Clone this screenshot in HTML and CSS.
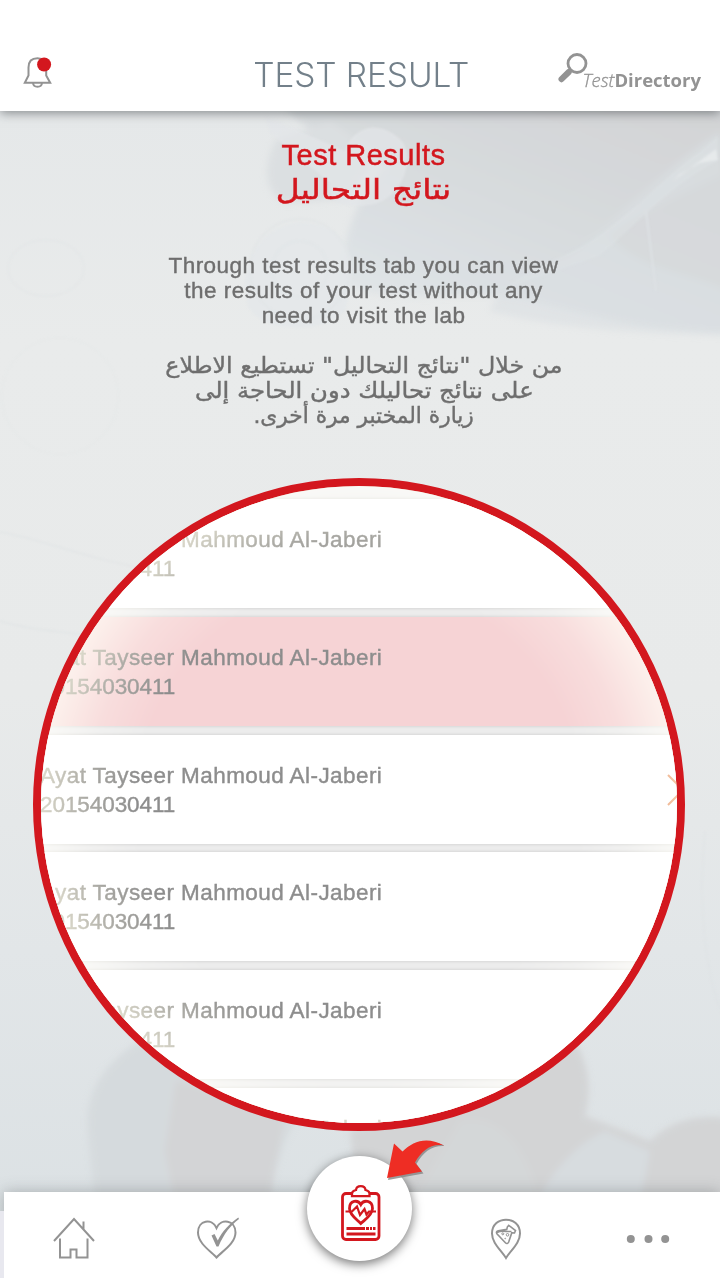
FILE: index.html
```html
<!DOCTYPE html>
<html lang="en">
<head>
<meta charset="utf-8">
<title>Test Result</title>
<link rel="stylesheet" href="styles.css">
</head>
<body>
<div class="app">
  <header class="topbar">
    <svg class="bell" viewBox="0 0 30 34" width="30" height="34">
      <path class="line" d="M5.500 19.500V11.500C5.500 5.500 9 2.200 14.500 2.200S23.200 5.500 23.200 11.500V19.500L27.200 26.800H1.800Z M10 27c.5 5 8.500 5 9 0"/>
      <circle class="dot" cx="21.100" cy="8.500" r="7"/>
    </svg>
    <h1 class="title">TEST RESULT</h1>
    <div class="directory">
      <svg class="lens" viewBox="0 0 30 30" width="30" height="30">
        <circle cx="19" cy="10.500" r="9" />
        <path d="M10.800 19L3.500 26.200"/>
      </svg>
      <span class="dir-light">Test</span><span class="dir-bold">Directory</span>
    </div>
  </header>

  <main class="content">
    <svg class="scene" viewBox="0 0 720 1167" width="720" height="1167" preserveAspectRatio="none">
      <defs>
        <linearGradient id="base" x1="0" y1="0" x2="0" y2="1">
          <stop offset="0" stop-color="#e5e8e9"/><stop offset=".2" stop-color="#e9ebeb"/>
          <stop offset=".5" stop-color="#e8eaea"/><stop offset=".72" stop-color="#e2e6e8"/><stop offset="1" stop-color="#dae0e3"/>
        </linearGradient>
        <linearGradient id="hand" x1="1" y1="0" x2=".2" y2="1">
          <stop offset="0" stop-color="#d2d3d5"/><stop offset=".4" stop-color="#d6d9db"/><stop offset=".75" stop-color="#dbe0e3"/><stop offset="1" stop-color="#e5e8e9"/>
        </linearGradient>
        <filter id="soft" x="-10%" y="-10%" width="120%" height="120%"><feGaussianBlur stdDeviation="3"/></filter>
        <filter id="fine"><feGaussianBlur stdDeviation="1"/></filter>
      </defs>
      <rect width="720" height="1167" fill="url(#base)"/>
      <g filter="url(#soft)">
        <path d="M280 -10H740V222C650 222 590 205 530 190S380 200 340 170C345 120 355 90 385 55C350 40 300 20 280 -10Z" fill="url(#hand)"/>
        <path d="M275 30C262 60 265 80 285 92L345 88L380 45L330 10Z" fill="#dbdfe1"/>
        <path d="M720 20C660 60 620 105 570 145C540 165 500 170 490 200C570 220 650 222 730 225V120Z" fill="#dae0e3" opacity=".6"/>
        <path d="M610 125C640 100 690 80 730 60V180C690 160 640 160 610 125Z" fill="#d5d7d9" opacity=".6"/>
        <path d="M88 1020C85 985 100 955 140 930L300 1000L285 1030L265 1090H95Z" fill="#d5dadd"/>
        <path d="M176 970L165 1040L175 1090H270L285 1000Z" fill="#d3d4d6"/>
        <path d="M575 930C592 960 590 985 585 1005L650 1030C670 1010 700 1002 730 1008V1095H360L350 1020Z" fill="#d3d4d5"/>
        <path d="M460 1010C500 1000 530 1040 540 1095H410Z" fill="#d5d9dc" opacity=".5"/>
        <path d="M535 1095C550 1060 580 1030 605 1020L650 1040L640 1095Z" fill="#d9dfe2" opacity=".7"/>
      </g>
      <g filter="url(#fine)">
        <path d="M265 5L345 40C350 20 375 5 400 28C418 45 402 90 370 94C345 98 325 90 330 72L270 22Z" fill="#e2e6e8" opacity=".7"/>
        <path d="M245 170C250 135 270 115 300 112C335 112 355 135 352 165L345 200C320 225 260 220 248 195Z" fill="#e4e8ea" opacity=".85"/>
        <g fill="none" stroke="#dfe3e5" stroke-width="1.500" opacity=".55">
          <circle cx="300" cy="158" r="50"/><circle cx="300" cy="158" r="28"/>
          <ellipse cx="46" cy="157" rx="38" ry="28" opacity=".6"/><circle cx="60" cy="285" r="58" opacity=".3"/>
          <path d="M0 421C50 430 90 450 160 460M0 510C30 520 65 520 90 525"/>
          <path d="M705 720C698 790 704 865 725 910"/>
        </g>
        <path d="M500 180C530 155 570 145 595 127C635 100 665 65 700 40L718 25V50C670 75 640 110 600 145Z" fill="#dfe4e6" opacity=".4"/>
        <path d="M673 70L716 38L718 49L700 52L680 63Z" fill="#e8ecee" opacity=".8"/>
        <path d="M646 100L656 180" stroke="#dde1e4" stroke-width="2"/>
      </g>
    </svg>

    <section class="intro">
      <h2 class="heading">Test Results</h2>
      <h2 class="heading-ar" dir="rtl" lang="ar"><span class="fit fit-title">نتائج التحاليل</span></h2>
      <p class="copy">Through test results tab you can view<br>the results of your test without any<br>need to visit the lab</p>
      <p class="copy-ar" dir="rtl" lang="ar">
        <span class="fit fit-one">من خلال "نتائج التحاليل" تستطيع الاطلاع</span>
        <span class="fit fit-two">على نتائج تحاليلك دون الحاجة إلى</span>
        <span class="fit fit-three">زيارة المختبر مرة أخرى.</span>
      </p>
    </section>

    <section class="magnifier">
      <ul class="results">
        <li class="row"><span class="name">Ayat Tayseer Mahmoud Al-Jaberi</span><span class="number">20154030411</span></li>
        <li class="row selected"><span class="name">Ayat Tayseer Mahmoud Al-Jaberi</span><span class="number">20154030411</span></li>
        <li class="row"><span class="name">Ayat Tayseer Mahmoud Al-Jaberi</span><span class="number">20154030411</span>
          <svg class="chevron" viewBox="0 0 18 32" width="18" height="32"><path d="M1 1L16 16L1 31"/></svg></li>
        <li class="row"><span class="name">Ayat Tayseer Mahmoud Al-Jaberi</span><span class="number">20154030411</span></li>
        <li class="row"><span class="name">Ayat Tayseer Mahmoud Al-Jaberi</span><span class="number">20154030411</span></li>
        <li class="row"><span class="name">Ayat Tayseer Mahmoud Al-Jaberi</span></li>
      </ul>
    </section>
  </main>

  <nav class="tabs">
    <svg class="tab" viewBox="0 0 44 46" width="44" height="46">
      <path d="M2 25L22 3L42 25M31.500 13V5.500M8 22.500V41.500H18.500V33.500H24.500V41.500H35.500V22.500"/>
    </svg>
    <svg class="tab" viewBox="0 0 44 46" width="44" height="46">
      <path d="M21.500 41.500C17 36 3 28 3 16.500C3 4 17 2 21.500 12C26 2 40.500 4 40.500 16.500C40.500 28 26 36 21.500 41.500Z"/>
      <path class="solid" d="M16.500 19.500L19.500 18L22.800 24.500C27.500 15 34 8 43.300 1.500L44 3C35.500 9.500 29 17.500 23.500 30.500H21.500Z"/>
    </svg>
    <div class="fab">
      <svg viewBox="0 0 42 58" width="42" height="58">
        <g class="red-line">
          <rect x="2.500" y="9.500" width="36.500" height="46" rx="3.500"/>
          <path class="tray" d="M12 12.200V9.500C12 7 14 6.500 16 6C16.500 .8 25 .8 25.500 6C27.500 6.500 29.500 7 29.500 9.500V12.200Z"/>
          <path d="M20.800 39.500C17 35.500 9.500 31 9.500 24.500C9.500 16 18 15.500 20.800 20.500C23.500 15.500 32.500 16 32.500 24.500C32.500 31 25 35.500 20.800 39.500Z"/>
          <path class="pulse" d="M5.500 27.500H12L17 22.500L20 31L24.500 25L26.500 30.500L29 27.500H36"/>
          <path d="M6.500 44.500H25M26 44.500H29M30 44.500H32M33 44.500H35.500M6.500 50H35.500"/>
        </g>
      </svg>
    </div>
    <svg class="tab" viewBox="0 0 44 46" width="44" height="46">
      <path d="M22 42C17 34 8 27 8 17.500C8 -1 36 -1 36 17.500C36 27 27 34 22 42Z"/>
      <path class="thin" d="M24.700 9.300L31.500 14.500L30.500 17L27.800 16.700L24.700 26C24 27.800 22.600 28 21.400 26.700L12.900 17.800C12 16.500 12.600 15 14.300 14.700L22.800 13.300L23.300 11ZM13 16.500C18 13.800 22 16 27.500 15.500"/>
      <circle class="micro" cx="18.800" cy="17.800" r="1"/><circle class="micro" cx="23.500" cy="18.800" r="1.300"/><circle class="micro" cx="21.200" cy="22.500" r=".4"/>
    </svg>
    <svg class="tab" viewBox="0 0 44 46" width="44" height="46">
      <g class="solid"><circle cx="4.800" cy="23" r="4"/><circle cx="22.500" cy="23" r="4"/><circle cx="39.200" cy="23" r="4"/></g>
    </svg>
  </nav>

  <svg class="pointer" viewBox="0 0 62 44" width="62" height="44">
    <path class="pointer-shadow" d="M6 41L13.500 7L21.500 14.500C32 3 46 -1 63 7C50 6 41 13 34.500 25L41.500 34.500Z"/>
    <path class="pointer-fill" d="M5 39L12 4.500L20.500 12.500C31 2 45 -3 62 6.500C49 4 39.500 12 33 23.500L40 32.500Z"/>
  </svg>
</div>
</body>
</html>
```

FILE: styles.css
```css
* { box-sizing: border-box; }

body {
  margin: 0;
  font-family: "Liberation Sans", Arial, sans-serif;
  background: #fff;
}

.app {
  position: relative;
  display: flex;
  flex-direction: column;
  width: 720px;
  height: 1278px;
  overflow: hidden;
}

.topbar {
  position: relative;
  z-index: 2;
  display: grid;
  grid-template-columns: 229px 1fr 230px;
  align-items: center;
  height: 111px;
  padding: 35px 19px 0 22.500px;
  background: #fff;
  box-shadow: 0 2px 10px rgba(70, 75, 78, .6);
}

.bell { display: block; }
.line { fill: none; stroke: #939393; stroke-width: 2; }
.dot { fill: #d3171e; }

.title {
  margin: 3px 0 0;
  color: #73808a;
  font: 300 33.500px/40px Inter, sans-serif;
  letter-spacing: -.1px;
  text-align: center;
  white-space: nowrap;
}

.directory {
  display: flex;
  justify-content: flex-end;
  align-items: flex-end;
  height: 40px;
  color: #939393;
  font: 18.500px/26px "Open Sans", sans-serif;
}
.lens { align-self: flex-start; margin-right: -6px; fill: none; stroke: #939393; }
.lens circle { stroke-width: 2.800px; }
.lens path { stroke-width: 6px; stroke-linecap: round; }
.dir-light { font-weight: 300; font-style: italic; -webkit-text-stroke: .3px; }
.dir-bold { font-weight: 700; }

.content { position: relative; flex: 1; }
.scene { position: absolute; inset: 0; }

.intro {
  position: relative;
  padding-top: 27px;
  text-align: center;
  color: #6e6e6e;
}
.heading, .heading-ar { margin: 0 0 0 7px; color: #d3171e; font-weight: 400; }
.heading { font-size: 29px; line-height: 34px; letter-spacing: .5px; -webkit-text-stroke: .5px; }
.heading-ar { height: 34px; font: 28px/36px "DejaVu Sans", sans-serif; -webkit-text-stroke: .5px; }
.copy {
  margin: 47px 0 0 7px;
  font-size: 22.500px;
  line-height: 25px;
  letter-spacing: .47px;
  -webkit-text-stroke: .4px;
}
.copy-ar {
  display: flex;
  flex-direction: column;
  align-items: center;
  margin: 25px 0 0 8px;
  font: 22px/25px "DejaVu Sans", sans-serif;
  -webkit-text-stroke: .4px;
}
.fit { display: inline-block; white-space: nowrap; }
.fit-title { transform: scaleX(1.177); }
.fit-one { transform: scaleX(1.08); }
.fit-two { transform: scaleX(1.105); }
.fit-three { transform: scaleX(.987); }

.magnifier {
  position: relative;
  isolation: isolate;
  width: 652px;
  height: 653px;
  margin: 50px 0 0 33px;
  border: 8px solid #d3171e;
  border-radius: 50%;
  overflow: hidden;
  background: #ececec;
}
.magnifier::after {
  content: "";
  position: absolute;
  inset: 0;
  background: radial-gradient(circle closest-side, rgba(175, 170, 138, 0) 70%, rgba(175, 170, 138, .35) 85%, rgba(175, 170, 138, 1) 100%);
  mix-blend-mode: screen;
}
.results {
  display: flex;
  flex-direction: column;
  gap: 8.800px;
  margin: 0;
  padding: 13px 0 0;
  list-style: none;
}
.row {
  position: relative;
  display: flex;
  flex: none;
  flex-direction: column;
  height: 109px;
  padding: 26px 0 0;
  background: #fff;
  box-shadow: 0 0 3px rgba(0, 0, 0, .16);
  color: #8d8d8d;
  font-size: 22.500px;
  line-height: 29px;
  letter-spacing: .43px;
  white-space: nowrap;
  -webkit-text-stroke: .4px;
}
.selected { background: #f6d3d5; }
.name, .number { margin-left: -1px; }
.number { letter-spacing: -.07px; }
.chevron { position: absolute; left: 626px; top: 39px; fill: none; stroke: #dc5a3c; stroke-width: 2; }

.tabs {
  position: relative;
  display: grid;
  grid-template-columns: 139px 148px 136px 158px 126px;
  justify-items: center;
  height: 86px;
  margin-left: 4px;
  padding-top: 24px;
  background: #fff;
  box-shadow: 0 0 14px rgba(70, 75, 78, .35);
}
.tabs::before {
  content: "";
  position: absolute;
  left: -4px;
  top: 19px;
  bottom: 0;
  width: 4px;
  background: #e8e8ef;
}
.tab { fill: none; stroke: #939393; stroke-width: 2; }
.tab .solid, .solid { fill: #939393; stroke: none; }
.thin { stroke-width: 1.600px; }
.micro { stroke-width: 1px; }

.fab {
  display: flex;
  align-items: center;
  justify-content: center;
  width: 105px;
  height: 105px;
  margin-top: -60px;
  padding: 9px 0 0 3px;
  border-radius: 50%;
  background: #fff;
  box-shadow: 0 3px 11px rgba(0, 0, 0, .55);
}
.red-line { fill: none; stroke: #d3171e; stroke-width: 2.800px; }
.tray { fill: #fff; stroke-width: 2.300px; }
.pulse { stroke-width: 2.200px; }

.pointer { position: absolute; left: 382px; top: 1139px; }
.pointer-fill { fill: #ee2d24; }
.pointer-shadow { fill: #858585; opacity: .8; }
```
